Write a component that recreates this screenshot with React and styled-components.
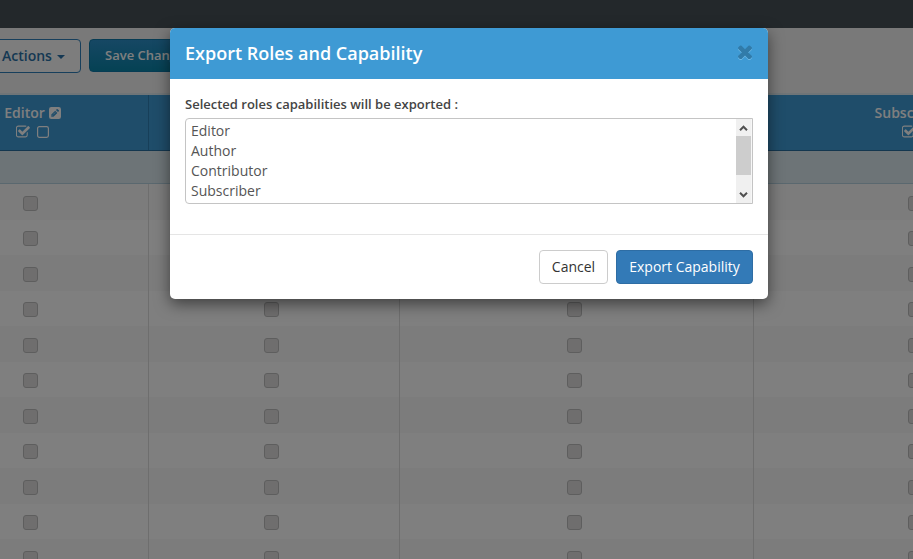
import React from "react";
import styled, { createGlobalStyle } from "styled-components";

const Global = createGlobalStyle`
  * { box-sizing: border-box; }
  body { margin: 0; overflow: hidden; font-family: "Open Sans", "Noto Sans", sans-serif; font-size: 14px; color: #333; }
`;

const Page = styled.div`
  position: relative;
  height: 559px;
  overflow: hidden;
  background: #fff;
`;
const TopStrip = styled.div`
  height: 28px;
  background: #475056;
`;
const Toolbar = styled.div`
  display: flex;
  align-items: flex-start;
  gap: 8px;
  height: 65px;
  padding-top: 11px;
  background: #f3f3f3;
  white-space: nowrap;
`;
const ActionsButton = styled.button`
  display: flex;
  align-items: center;
  gap: 5px;
  width: 86px;
  height: 34px;
  margin-left: -5px;
  padding: 0 0 1px 6px;
  border: 1px solid #2f7fb8;
  border-radius: 4px;
  background: #fbfbfb;
  color: #2b71a6;
  font: 600 14px "Open Sans", sans-serif;
`;
const DropCaret = styled.span`
  margin-top: 2px;
  border: 4px solid transparent;
  border-top-color: currentColor;
  border-bottom: 0;
`;
const SaveButton = styled.button`
  width: 130px;
  height: 33px;
  padding: 0 0 1px 15px;
  text-align: left;
  border: 1px solid #0f79a8;
  border-radius: 4px;
  background: linear-gradient(#2c8fc8, #0a84a8);
  color: #fff;
  font: 600 13px "Open Sans", sans-serif;
`;
const Table = styled.div`
  border-top: 2px solid #dfeaf0;
`;
const columns = "237px 251px 354px 325px";
const HeadRow = styled.div`
  display: grid;
  grid-template-columns: ${columns};
  width: 1167px;
  height: 56px;
  margin-left: -88px;
  background: #3e9ad4;
  border-bottom: 1px solid #286f9e;
`;
const HeadCell = styled.div`
  display: flex;
  flex-direction: column;
  align-items: center;
  padding: 8px 0 0 1px;
  border-right: 1px solid #2f7fb3;
  color: #fff;
  font: 600 14px/20px "Open Sans", sans-serif;
`;
const HeadLine = styled.div`
  display: flex;
  align-items: center;
  gap: ${(p) => p.$gap}px;
  height: ${(p) => p.$height}px;
  padding-left: ${(p) => p.$indent || 0}px;
`;
const Band = styled.div`
  height: 33px;
  background: #dbe8ef;
  border-bottom: 1px solid #b4d0df;
`;
const Row = styled.div`
  display: grid;
  grid-template-columns: ${columns};
  width: 1167px;
  height: ${(p) => (p.$odd ? 36 : 35)}px;
  margin-left: -88px;
  background: ${(p) => (p.$odd ? "#f9f9f9" : "#fff")};
`;
const Cell = styled.div`
  display: flex;
  justify-content: center;
  align-items: flex-start;
  padding: ${(p) => (p.$odd ? 12 : 11)}px ${(p) => p.$shift}px 0 0;
  border-right: 1px solid #dcdcdc;
`;
const Check = styled.span`
  width: 15px;
  height: 15px;
  border: 1px solid #bcbcbc;
  border-radius: 3px;
  background: #dfdddd;
`;
const Backdrop = styled.div`
  position: absolute;
  inset: 0;
  background: rgba(0, 0, 0, 0.5);
`;
const Dialog = styled.section`
  position: absolute;
  left: 170px;
  top: 28px;
  width: 598px;
  height: 271px;
  overflow: hidden;
  border-radius: 5px;
  background: #fff;
  box-shadow: 0 5px 15px rgba(0, 0, 0, 0.5);
`;
const DialogHeader = styled.header`
  display: flex;
  align-items: center;
  justify-content: space-between;
  height: 51px;
  padding: 0 16px 2px 15px;
  background: #3e9ad4;
`;
const Title = styled.h4`
  margin: 0;
  color: #fff;
  font: 600 18px/26px "Open Sans", sans-serif;
`;
const CloseButton = styled.button`
  display: flex;
  margin-bottom: 1px;
  padding: 0;
  border: 0;
  background: none;
  color: #317ba9;
  filter: drop-shadow(0 1px 0 #6bb7e5);
`;
const DialogBody = styled.div`
  height: 155px;
  padding: 15px;
`;
const Label = styled.label`
  display: block;
  height: 24px;
  color: #444;
  font: 600 13px/20px "Open Sans", sans-serif;
`;
const ListBox = styled.div`
  display: flex;
  justify-content: space-between;
  height: 86px;
  border: 1px solid #c4c4c4;
  border-radius: 4px 0 0 4px;
  overflow: hidden;
`;
const Options = styled.ul`
  margin: 0;
  padding: 2px 5px;
  list-style: none;
  color: #555;
  font: 14px/20px "Open Sans", sans-serif;
`;
const ScrollBar = styled.div`
  display: flex;
  flex-direction: column;
  width: 16px;
  background: #f0f0f0;
  border-right: 1px solid #f7f7f7;
  color: #505050;
`;
const ScrollArrow = styled.span`
  display: flex;
  align-items: center;
  justify-content: center;
  height: 17px;
`;
const Thumb = styled.div`
  height: 39px;
  margin-bottom: 11px;
  background: #cdcdcd;
`;
const DialogFooter = styled.footer`
  display: flex;
  justify-content: flex-end;
  gap: 8px;
  height: 65px;
  padding: 15px;
  border-top: 1px solid #e5e5e5;
`;
const FooterButton = styled.button`
  height: 34px;
  width: ${(p) => (p.$primary ? 137 : 69)}px;
  padding: 0;
  border: 1px solid ${(p) => (p.$primary ? "#2e6da4" : "#ccc")};
  border-radius: 4px;
  background: ${(p) => (p.$primary ? "#337ab7" : "#fff")};
  color: ${(p) => (p.$primary ? "#fff" : "#333")};
  font: 14px/20px "Open Sans", sans-serif;
  white-space: nowrap;
`;

const CheckedIcon = () => (
  <svg width="14" height="13" viewBox="192 216 1664 1408" fill="currentColor">
    <path d="M1472 930v318q0 119-84.5 203.5t-203.5 84.5h-832q-119 0-203.5-84.5t-84.5-203.5v-832q0-119 84.5-203.5t203.5-84.5h832q63 0 117 25 15 7 18 23 3 17-9 29l-49 49q-10 10-23 10-3 0-9-2-23-6-45-6h-832q-66 0-113 47t-47 113v832q0 66 47 113t113 47h832q66 0 113-47t47-113v-254q0-13 9-22l64-64q10-10 23-10 6 0 12 3 20 8 20 29zm231-489l-814 814q-24 24-57 24t-57-24l-430-430q-24-24-24-57t24-57l110-110q24-24 57-24t57 24l263 263 647-647q24-24 57-24t57 24l110 110q24 24 24 57t-24 57z" transform="translate(117 88)" />
  </svg>
);
const EmptyIcon = () => (
  <svg width="12" height="12" viewBox="0 0 12 12" fill="none">
    <rect x=".6" y=".6" width="10.8" height="10.8" rx="1.8" stroke="currentColor" strokeWidth="1.2" />
  </svg>
);
const EditIcon = () => (
  <svg width="12" height="12" viewBox="0 0 12 12">
    <rect width="12" height="12" rx="2.3" fill="currentColor" />
    <path d="M2.3 9.8V7.6L6.2 3.7l2.2 2.2-3.9 3.9zM6.9 3l.8-.8q.5-.4 1 0l1.1 1.1q.5.5 0 1l-.8.8z" fill="#3e9ad4" />
    <path d="M3 8.4l.8.8M4.3 7.4l2-2" stroke="#fff" strokeWidth=".5" />
  </svg>
);
const CloseIcon = () => (
  <svg width="14" height="14" viewBox="302 334 1188 1188" fill="currentColor">
    <path d="M1490 1322q0 40-28 68l-136 136q-28 28-68 28t-68-28l-294-294-294 294q-28 28-68 28t-68-28l-136-136q-28-28-28-68t28-68l294-294-294-294q-28-28-28-68t28-68l136-136q28-28 68-28t68 28l294 294 294-294q28-28 68-28t68 28l136 136q28 28 28 68t-28 68l-294 294 294 294q28 28 28 68z" />
  </svg>
);
const Chevron = ({ down }) => (
  <svg width="9" height="6" viewBox="0 0 9 6" fill="none" stroke="currentColor" strokeWidth="2">
    <path d={down ? "M1 .8L4.5 4.3 8 .8" : "M1 5.2L4.5 1.7 8 5.2"} />
  </svg>
);

const heads = ["Editor", "", "", "Subscriber"];
const shifts = [0, 6, 5, 2];
const roles = ["Editor", "Author", "Contributor", "Subscriber"];

export default function App() {
  return (
    <Page>
      <Global />
      <TopStrip />
      <Toolbar>
        <ActionsButton>Actions <DropCaret /></ActionsButton>
        <SaveButton>Save Changes</SaveButton>
      </Toolbar>
      <Table>
        <HeadRow>
          {heads.map((name, i) => (
            <HeadCell key={i}>
              {name && (
                <>
                  <HeadLine $gap={4} $height={20} $indent={4}>{name}<EditIcon /></HeadLine>
                  <HeadLine $gap={7} $height={17} $indent={4}><CheckedIcon /><EmptyIcon /></HeadLine>
                </>
              )}
            </HeadCell>
          ))}
        </HeadRow>
        <Band />
        {Array.from({ length: 11 }, (_, r) => (
          <Row key={r} $odd={r % 2 === 0}>
            {shifts.map((s, c) => (
              <Cell key={c} $odd={r % 2 === 0} $shift={s}><Check /></Cell>
            ))}
          </Row>
        ))}
      </Table>
      <Backdrop />
      <Dialog>
        <DialogHeader>
          <Title>Export Roles and Capability</Title>
          <CloseButton aria-label="Close"><CloseIcon /></CloseButton>
        </DialogHeader>
        <DialogBody>
          <Label>Selected roles capabilities will be exported :</Label>
          <ListBox>
            <Options>{roles.map((r) => <li key={r}>{r}</li>)}</Options>
            <ScrollBar>
              <ScrollArrow><Chevron /></ScrollArrow>
              <Thumb />
              <ScrollArrow><Chevron down /></ScrollArrow>
            </ScrollBar>
          </ListBox>
        </DialogBody>
        <DialogFooter>
          <FooterButton>Cancel</FooterButton>
          <FooterButton $primary>Export Capability</FooterButton>
        </DialogFooter>
      </Dialog>
    </Page>
  );
}
